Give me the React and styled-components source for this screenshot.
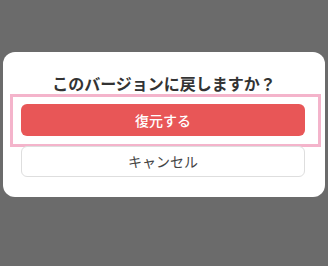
import React from "react";
import styled, { createGlobalStyle } from "styled-components";

const Global = createGlobalStyle`
  html, body { margin: 0; padding: 0; background: #6b6b6b; }
  * { box-sizing: border-box; }
`;

const Overlay = styled.div`
  width: 328px;
  height: 266px;
  background: #6b6b6b;
  padding: 52px 3px 0 3px;
  font-family: "Noto Sans CJK JP", "Noto Sans", sans-serif;
`;

const Modal = styled.div`
  width: 322px;
  height: 145px;
  background: #ffffff;
  border-radius: 12px;
  padding: 21px 20px 20px 18px;
  display: flex;
  flex-direction: column;
`;

const Title = styled.h2`
  margin: 0 0 1px 0;
  font-size: 16px;
  line-height: 20px;
  font-weight: 700;
  color: #333333;
  text-align: center;
  padding-left: 2px;
`;

const Highlight = styled.div`
  border: 3px solid #f4b4cb;
  padding: 7px 13px 8px 8px;
  margin: 0 -16px 0 -11px;
`;

const Button = styled.button`
  display: flex;
  align-items: center;
  justify-content: center;
  width: 100%;
  height: ${(p) => (p.$primary ? "32px" : "31px")};
  border-radius: 6px;
  font-family: inherit;
  font-size: 14px;
  line-height: 1;
  cursor: pointer;
  background: ${(p) => (p.$primary ? "#e85657" : "#ffffff")};
  color: ${(p) => (p.$primary ? "#ffffff" : "#444444")};
  border: ${(p) => (p.$primary ? "none" : "1px solid #dedede")};
  font-weight: ${(p) => (p.$primary ? 500 : 400)};
  margin-top: ${(p) => (p.$primary ? "0" : "-1px")};
  padding: 0 0 ${(p) => (p.$primary ? "0" : "2px")} 0;
`;

export default function App() {
  return (
    <>
      <Global />
      <Overlay>
        <Modal>
          <Title>このバージョンに戻しますか？</Title>
          <Highlight>
            <Button $primary>復元する</Button>
          </Highlight>
          <Button>キャンセル</Button>
        </Modal>
      </Overlay>
    </>
  );
}
